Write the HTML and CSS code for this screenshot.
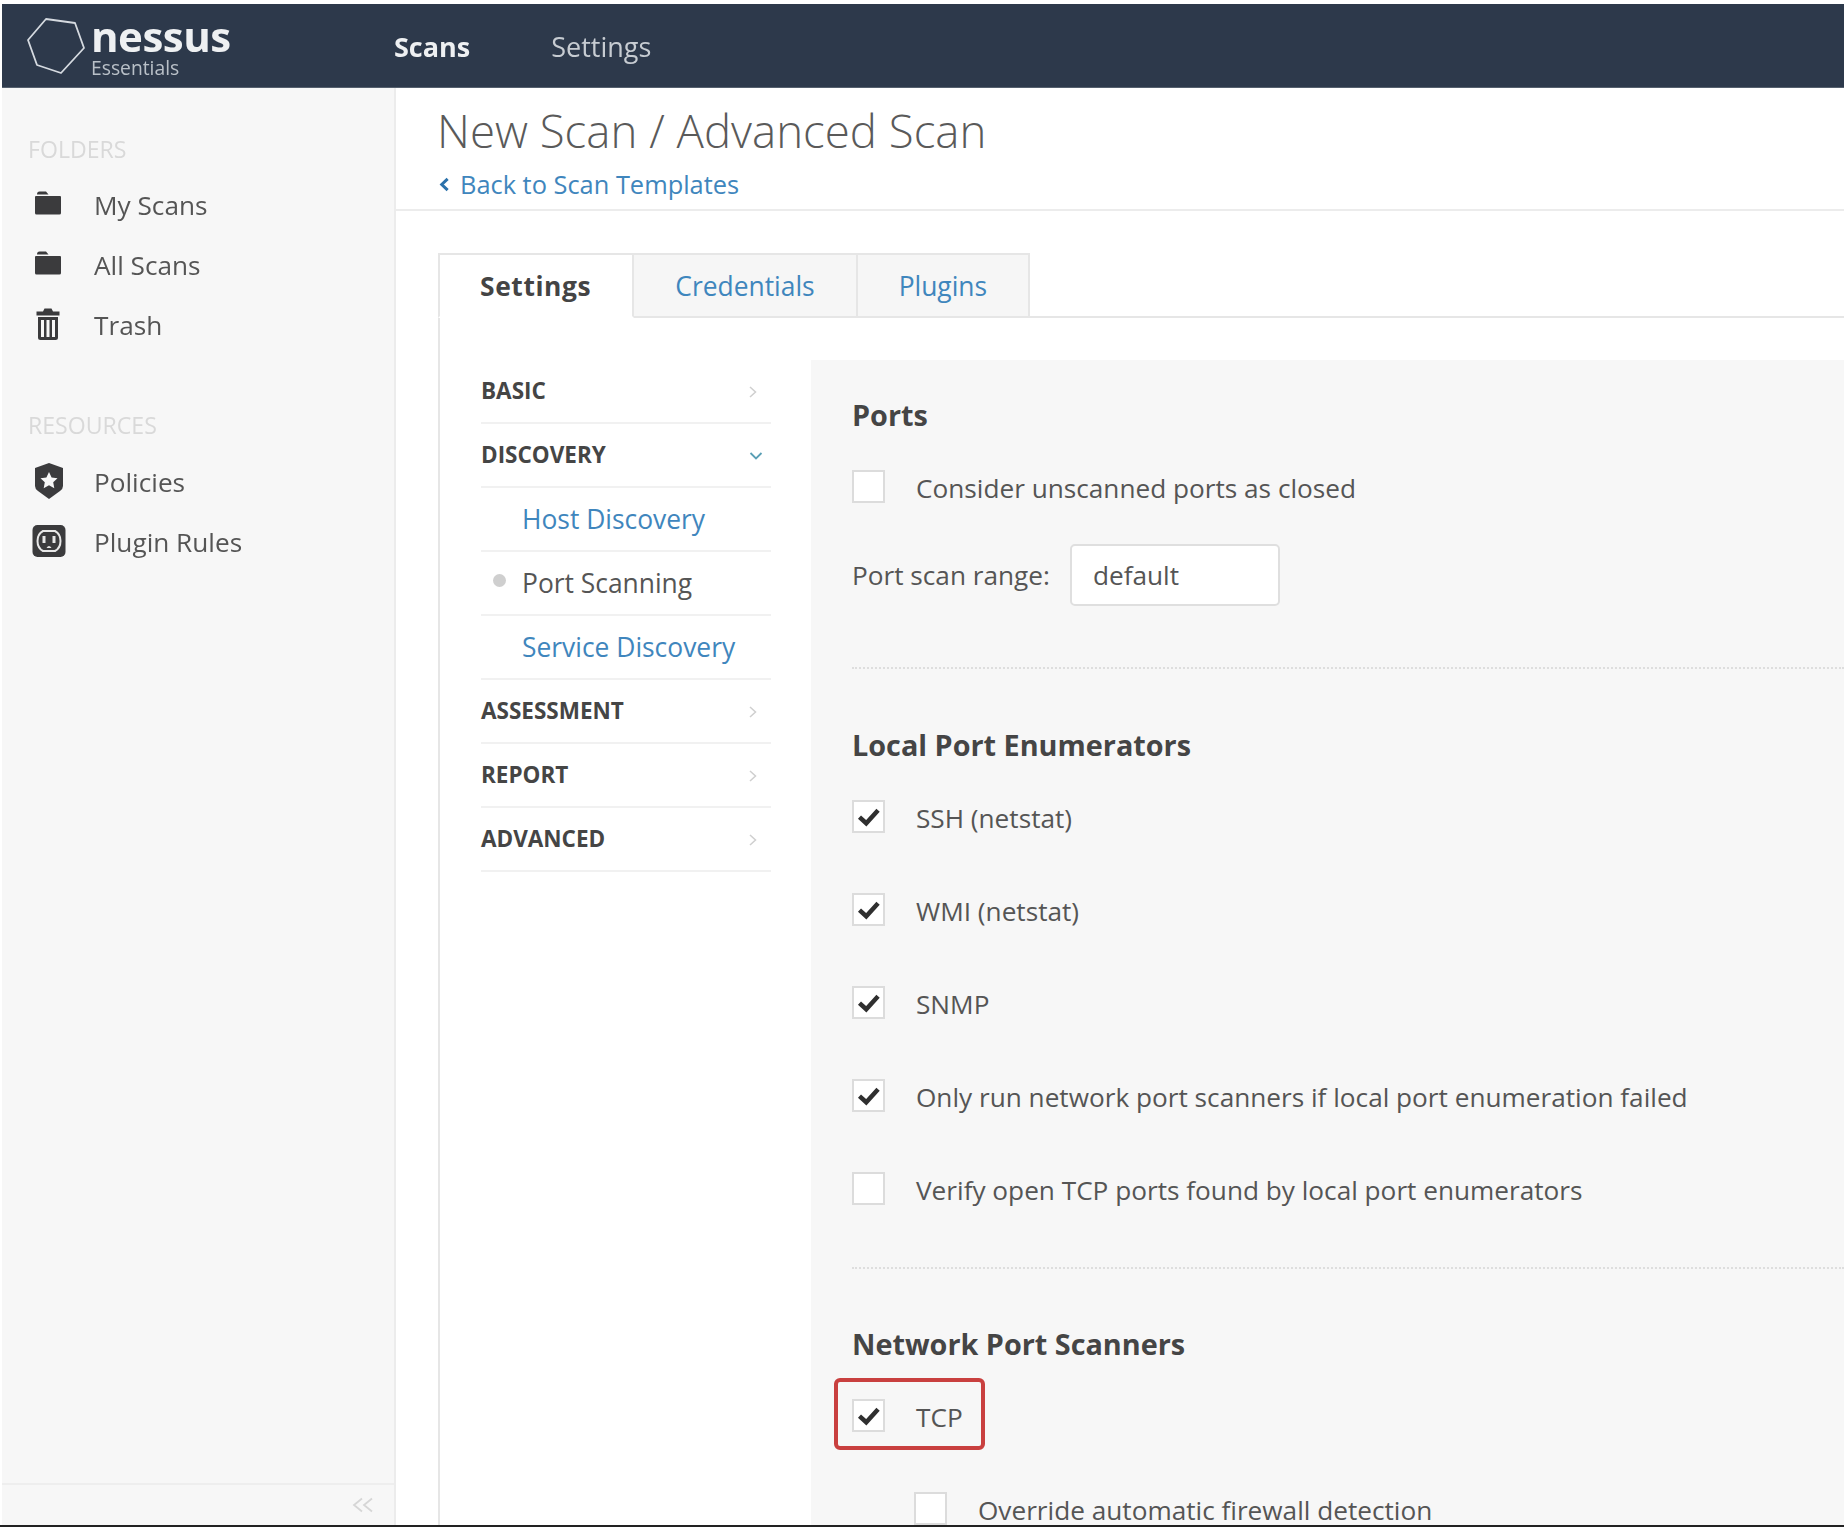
FILE: index.html
```html
<!DOCTYPE html>
<html lang="en">
<head>
<meta charset="utf-8">
<title>Nessus Essentials - New Scan</title>
<link rel="stylesheet" href="styles.css">
</head>
<body>
<div class="screen">
  <header class="topbar">
    <div class="brand">
      <svg class="brand-hex" viewBox="0 0 60 60" aria-hidden="true"><path d="M20 3 L49 7 L58 32 L35 57 L11 49 L2 24 Z" fill="none" stroke="#d5dae0" stroke-width="1.8" stroke-linejoin="round"/></svg>
      <div class="brand-text">
        <span class="brand-name">nessus</span>
        <span class="brand-sub">Essentials</span>
      </div>
    </div>
    <nav class="topnav">
      <a class="topnav-item is-active">Scans</a>
      <a class="topnav-item">Settings</a>
    </nav>
  </header>
  <div class="body-row">
    <aside class="sidebar">
      <div class="side-scroll">
        <h3 class="side-title">FOLDERS</h3>
        <ul class="side-list">
          <li class="side-item">
            <svg class="side-icon" viewBox="0 0 28 28" aria-hidden="true"><path d="M3 5.500 Q3 2.500 5.500 2.500 H12 L14.500 5.500 Z M1 8 Q1 7 2 7 H26 Q27 7 27 8 V24 Q27 25.500 25.500 25.500 H2.500 Q1 25.500 1 24 Z" fill="#3b3b3d"/></svg>
            <span>My Scans</span>
          </li>
          <li class="side-item">
            <svg class="side-icon" viewBox="0 0 28 28" aria-hidden="true"><path d="M3 5.500 Q3 2.500 5.500 2.500 H12 L14.500 5.500 Z M1 8 Q1 7 2 7 H26 Q27 7 27 8 V24 Q27 25.500 25.500 25.500 H2.500 Q1 25.500 1 24 Z" fill="#3b3b3d"/></svg>
            <span>All Scans</span>
          </li>
          <li class="side-item">
            <svg class="side-icon side-icon-trash" viewBox="0 0 24 32" aria-hidden="true"><path fill="#3b3b3d" fill-rule="evenodd" d="M8.500 0.500 H15.500 L17 3.500 H23.500 V7.500 H0.500 V3.500 H7 Z M2 9 H22 V29.500 Q22 32 19.500 32 H4.500 Q2 32 2 29.500 Z M5 12 V29 H8 V12 Z M10.500 12 V29 H13.500 V12 Z M16 12 V29 H19 V12 Z"/></svg>
            <span>Trash</span>
          </li>
        </ul>
        <h3 class="side-title side-title-second">RESOURCES</h3>
        <ul class="side-list">
          <li class="side-item">
            <svg class="side-icon side-icon-tall" viewBox="0 0 30 36" aria-hidden="true"><path fill="#3b3b3d" fill-rule="evenodd" d="M15 0 L29 5 V23 Q29 26 26 28 L15 36 L4 28 Q1 26 1 23 V5 Z M15 9 L17.600 14.600 L23.500 15.300 L19.200 19.300 L20.300 25.200 L15 22.300 L9.700 25.200 L10.800 19.300 L6.500 15.300 L12.400 14.600 Z"/></svg>
            <span>Policies</span>
          </li>
          <li class="side-item">
            <svg class="side-icon side-icon-wide" viewBox="0 0 34 34" aria-hidden="true"><rect width="33" height="32" x="0.500" y="1" rx="5" fill="#3b3b3d"/><path d="M11 7 H23 Q28.500 10 28.500 17 Q28.500 24 23 27 H11 Q5.500 24 5.500 17 Q5.500 10 11 7 Z" fill="none" stroke="#e8e8e8" stroke-width="2"/><rect x="10.500" y="12" width="3" height="7" fill="#e8e8e8"/><rect x="20.500" y="12" width="3" height="7" fill="#e8e8e8"/><path d="M14.500 24 Q17 20 19.500 24 Z" fill="#e8e8e8"/></svg>
            <span>Plugin Rules</span>
          </li>
        </ul>
      </div>
      <div class="side-footer">
        <svg class="collapse-icon" viewBox="0 0 22 16" aria-hidden="true"><path d="M10 1.500 L2 8 L10 14.500 M20 1.500 L12 8 L20 14.500" fill="none" stroke="#d6d6d6" stroke-width="1.800"/></svg>
      </div>
    </aside>
    <main class="main">
      <div class="page-head">
        <h1 class="page-title">New Scan / Advanced Scan</h1>
        <a class="back-link">
          <svg class="back-chevron" viewBox="0 0 10 12" aria-hidden="true"><path d="M7.500 1.500 L2.800 6 L7.500 10.500" fill="none" stroke="#2c72ab" stroke-width="2.400"/></svg>
          Back to Scan Templates
        </a>
      </div>
      <div class="page-body">
        <div class="tabs">
          <a class="tab is-active">Settings</a>
          <a class="tab">Credentials</a>
          <a class="tab">Plugins</a>
          <span class="tabs-rest"></span>
        </div>
        <div class="tab-panel">
          <ul class="menu">
            <li class="menu-row menu-head"><span>BASIC</span>
              <svg class="chev" viewBox="0 0 10 14" aria-hidden="true"><path d="M2 2 L7.500 7 L2 12" fill="none" stroke="#cfcfcf" stroke-width="1.500"/></svg></li>
            <li class="menu-row menu-head"><span>DISCOVERY</span>
              <svg class="chev-down" viewBox="0 0 14 10" aria-hidden="true"><path d="M1.500 2 L7 7.500 L12.500 2" fill="none" stroke="#5a9fb5" stroke-width="1.800"/></svg></li>
            <li class="menu-row menu-sub is-link"><span>Host Discovery</span></li>
            <li class="menu-row menu-sub is-current"><i class="dot"></i><span>Port Scanning</span></li>
            <li class="menu-row menu-sub is-link"><span>Service Discovery</span></li>
            <li class="menu-row menu-head"><span>ASSESSMENT</span>
              <svg class="chev" viewBox="0 0 10 14" aria-hidden="true"><path d="M2 2 L7.500 7 L2 12" fill="none" stroke="#cfcfcf" stroke-width="1.500"/></svg></li>
            <li class="menu-row menu-head"><span>REPORT</span>
              <svg class="chev" viewBox="0 0 10 14" aria-hidden="true"><path d="M2 2 L7.500 7 L2 12" fill="none" stroke="#cfcfcf" stroke-width="1.500"/></svg></li>
            <li class="menu-row menu-head"><span>ADVANCED</span>
              <svg class="chev" viewBox="0 0 10 14" aria-hidden="true"><path d="M2 2 L7.500 7 L2 12" fill="none" stroke="#cfcfcf" stroke-width="1.500"/></svg></li>
          </ul>
          <div class="form">
            <section class="section section-first">
              <h2 class="section-title">Ports</h2>
              <div class="check-row"><span class="box"></span><span>Consider unscanned ports as closed</span></div>
              <div class="field-row"><span>Port scan range:</span><span class="text-input">default</span></div>
            </section>
            <section class="section">
              <h2 class="section-title">Local Port Enumerators</h2>
              <div class="check-list">
                <div class="check-row"><span class="box is-checked"><svg viewBox="0 0 24 24" aria-hidden="true"><path d="M4 12.500 L10 18 L20.500 6.500" fill="none" stroke="#2f2f2f" stroke-width="4"/></svg></span><span>SSH (netstat)</span></div>
                <div class="check-row"><span class="box is-checked"><svg viewBox="0 0 24 24" aria-hidden="true"><path d="M4 12.500 L10 18 L20.500 6.500" fill="none" stroke="#2f2f2f" stroke-width="4"/></svg></span><span>WMI (netstat)</span></div>
                <div class="check-row"><span class="box is-checked"><svg viewBox="0 0 24 24" aria-hidden="true"><path d="M4 12.500 L10 18 L20.500 6.500" fill="none" stroke="#2f2f2f" stroke-width="4"/></svg></span><span>SNMP</span></div>
                <div class="check-row"><span class="box is-checked"><svg viewBox="0 0 24 24" aria-hidden="true"><path d="M4 12.500 L10 18 L20.500 6.500" fill="none" stroke="#2f2f2f" stroke-width="4"/></svg></span><span>Only run network port scanners if local port enumeration failed</span></div>
                <div class="check-row"><span class="box"></span><span>Verify open TCP ports found by local port enumerators</span></div>
              </div>
            </section>
            <section class="section section-last">
              <h2 class="section-title">Network Port Scanners</h2>
              <div class="check-row check-row-tcp"><span class="box is-checked"><svg viewBox="0 0 24 24" aria-hidden="true"><path d="M4 12.500 L10 18 L20.500 6.500" fill="none" stroke="#2f2f2f" stroke-width="4"/></svg></span><span>TCP</span></div>
              <div class="check-row check-row-nested"><span class="box"></span><span>Override automatic firewall detection</span></div>
            </section>
          </div>
        </div>
      </div>
    </main>
  </div>
</div>
</body>
</html>
```
FILE: styles.css
```css
* { box-sizing: border-box; }
html, body { margin: 0; padding: 0; background: #fff; }
body {
  width: 1844px;
  height: 1530px;
  overflow: hidden;
  font-family: "Open Sans", "Noto Sans", sans-serif;
  color: #4f4f4f;
}
h1, h2, h3, ul { margin: 0; padding: 0; list-style: none; }

.screen {
  height: 1527px;
  padding: 4px 0 0 2px;
  display: flex;
  flex-direction: column;
  border-bottom: 2px solid #222;
  overflow: hidden;
  filter: blur(0.7px);
}

/* top bar */
.topbar {
  flex: none;
  height: 84px;
  background: #2d394b;
  border-bottom: 1px solid #55606e;
  display: flex;
  align-items: center;
  padding-left: 24px;
}
.brand { width: 366px; display: flex; align-items: center; gap: 5px; }
.brand-hex { width: 60px; height: 60px; flex: none; }
.brand-text { display: flex; flex-direction: column; padding-top: 7px; }
.brand-name { font-size: 42px; font-weight: 700; line-height: 36px; color: #eef0f2; letter-spacing: -0.5px; }
.brand-sub { font-size: 19.3px; line-height: 24px; margin-top: 2px; color: #b9c0c8; }
.topnav { display: flex; gap: 81px; margin: 2px 0 0 2px; }
.topnav-item { font-size: 27px; color: #c7ccd2; }
.topnav-item.is-active { font-weight: 700; color: #eef0f2; }

.body-row { flex: 1; display: flex; min-height: 0; }

/* sidebar */
.sidebar {
  flex: none;
  width: 394px;
  background: #f7f7f7;
  border-right: 2px solid #ececec;
  display: flex;
  flex-direction: column;
}
.side-scroll { flex: 1; padding: 44px 0 0 26px; }
.side-title { font-size: 23.1px; line-height: 34px; font-weight: 400; color: #d9d9d9; }
.side-title-second { margin-top: 53px; }
.side-list { margin-top: 9px; }
.side-title-second + .side-list { margin-top: 10px; }
.side-item { height: 60px; display: flex; align-items: center; font-size: 26.2px; color: #555; }
.side-icon { width: 28px; height: 28px; margin: -4px 32px 0 6px; flex: none; }
.side-icon-trash { width: 24px; height: 32px; margin: -2px 34px 0 8px; }
.side-icon-tall { height: 36px; width: 30px; margin: -2px 30px 0 6px; }
.side-icon-wide { width: 34px; height: 34px; margin: -2px 28px 0 4px; }
.side-footer {
  flex: none;
  height: 42px;
  border-top: 2px solid #eeeeee;
  display: flex;
  justify-content: flex-end;
  align-items: center;
  padding-right: 20px;
}
.collapse-icon { width: 22px; height: 16px; }

/* main */
.main { flex: 1; min-width: 0; display: flex; flex-direction: column; background: #fff; }
.page-head { flex: none; height: 123px; padding: 11px 0 0 41px; border-bottom: 2px solid #ececec; }
.page-title { font-size: 45.6px; line-height: 62px; font-weight: 300; color: #5a5a5a; }
.back-link { display: flex; align-items: center; gap: 9px; font-size: 25.4px; line-height: 38px; color: #3f86bd; margin: 4px 0 0 1px; }
.back-chevron { width: 13px; height: 15px; }

.page-body { flex: 1; min-height: 0; padding: 42px 0 0 42px; display: flex; flex-direction: column; }
.tabs { flex: none; height: 65px; display: flex; align-items: stretch; }
.tab {
  display: flex;
  align-items: center;
  font-size: 26.4px;
  color: #3f86bd;
  background: #f6f6f6;
  border: 2px solid #e6e6e6;
  border-left: 0;
  padding: 0 41px;
}
.tab.is-active {
  padding: 0 41px 0 40px;
  font-weight: 700;
  letter-spacing: 0.6px;
  color: #444;
  background: #fff;
  border-left: 2px solid #e6e6e6;
  border-bottom-color: #fff;
}
.tabs-rest { flex: 1; border-bottom: 2px solid #e6e6e6; }

.tab-panel { flex: 1; min-height: 0; display: flex; border-left: 2px solid #e6e6e6; padding: 42px 0 0 41px; }
.menu { flex: none; width: 290px; margin-right: 40px; }
.menu-row {
  height: 64px;
  display: flex;
  align-items: center;
  position: relative;
  border-bottom: 2px solid #f1f1f1;
}
.menu-head { font-size: 22.5px; font-weight: 700; color: #454545; justify-content: space-between; padding: 0 12px 2px 0; }
.menu-sub { font-size: 26.4px; padding-left: 41px; }
.is-link { color: #3f86bd; }
.is-current { color: #555; }
.chev { width: 10px; height: 14px; margin: 4px 1px 0 0; }
.chev-down { width: 14px; height: 10px; margin: 4px -4px 0 0; }
.dot { position: absolute; left: 12px; top: 22px; width: 13px; height: 13px; border-radius: 50%; background: #cfcfcf; }

/* form */
.form { flex: 1; min-width: 0; background: #f7f7f7; padding-left: 41px; overflow: hidden; }
.section { border-bottom: 2px dotted #dedede; padding: 61px 0 55px; }
.section-first { padding: 40px 0 61px; }
.section-last { border-bottom: 0; padding-bottom: 0; position: relative; padding-top: 60px; }
.section-title { font-size: 28.8px; line-height: 30px; font-weight: 700; color: #454545; margin-bottom: 36px; }
.check-row { height: 44px; display: flex; align-items: center; font-size: 26.2px; color: #555; }
.check-list { display: flex; flex-direction: column; gap: 49px; }
.check-row-tcp { position: relative; }
.check-row-tcp::after {
  content: "";
  position: absolute;
  box-sizing: border-box;
  left: -18px;
  top: -17px;
  width: 151px;
  height: 72px;
  border: 4px solid #c9403f;
  border-radius: 6px;
}
.check-row-nested { margin-top: 49px; padding-left: 62px; }
.box {
  flex: none;
  width: 33px;
  height: 33px;
  margin: -4px 31px 0 0;
  background: #fff;
  border: 2px solid #dcdcdc;
  display: flex;
  align-items: center;
  justify-content: center;
}
.box svg { width: 27px; height: 27px; }
.field-row { display: flex; align-items: center; gap: 20px; font-size: 26.2px; color: #555; margin-top: 34px; }
.text-input {
  width: 210px;
  height: 62px;
  background: #fff;
  border: 2px solid #dfdfdf;
  border-radius: 5px;
  padding-left: 21px;
  display: flex;
  align-items: center;
}
```
